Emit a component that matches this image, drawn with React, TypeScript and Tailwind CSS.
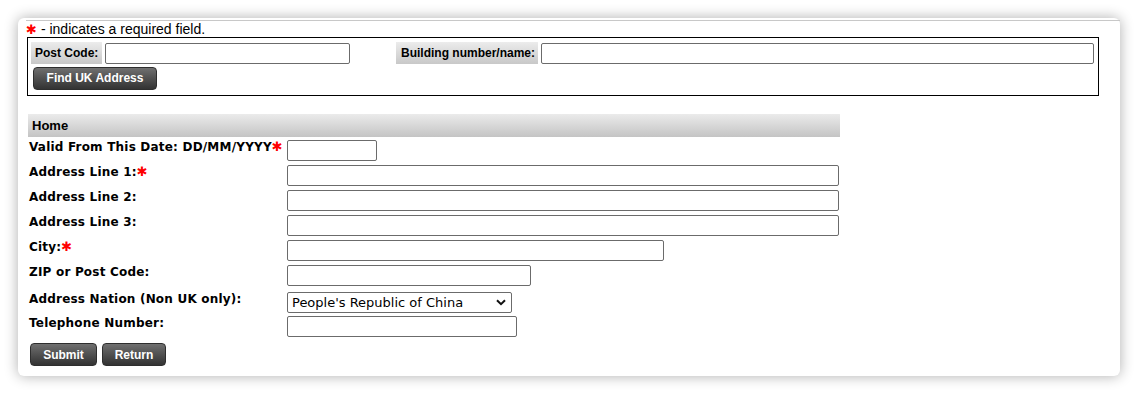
import React from "react";

const Star = () => (
  <span className="text-[#ff0000] font-bold text-[13px] leading-none" style={{ fontFamily: '"DejaVu Sans", sans-serif' }}>✱</span>
);

const inputCls =
  "h-[21px] border border-[#6b6b6b] rounded-[2px] bg-white outline-none px-1 text-[13px]";

const Btn = ({ children, w }: { children: React.ReactNode; w: string }) => (
  <button
    className={`h-[23px] ${w} rounded-[4px] border border-[#2e2e2e] bg-gradient-to-b from-[#707070] to-[#333333] text-white font-bold text-[12px] leading-none font-['Liberation_Sans',Arial,sans-serif]`}
  >
    {children}
  </button>
);

function Row({
  label,
  star,
  h,
  children,
}: {
  label: string;
  star?: boolean;
  h: string;
  children: React.ReactNode;
}) {
  return (
    <div className={`flex items-start ${h}`}>
      <div className="w-[258px] whitespace-nowrap font-bold text-[12px] leading-[14px] text-black font-['DejaVu_Sans',Verdana,sans-serif] tracking-[0.2px]">
        {label}
        {star && <Star />}
      </div>
      {children}
    </div>
  );
}

export default function App() {
  return (
    <div className="w-[1138px] h-[394px] bg-white pt-[18px] pl-[18px]">
      <div className="w-[1102px] h-[358px] rounded-[6px] bg-white shadow-[0_0_14px_rgba(0,0,0,0.32)] pl-[8px] pt-[2px] font-['Liberation_Sans',Arial,sans-serif]">
        <div className="border-t border-[#c8c8c8]">
          <div className="text-[14px] leading-[16px] text-black h-[16px] flex items-center">
            <Star />
            <span className="ml-[4px]">- indicates a required field.</span>
          </div>
          <div className="ml-[1px] w-[1072px] h-[59px] border border-black pl-[3px] pt-[4px]">
            <div className="flex items-center h-[22px]">
              <div className="w-[71px] h-[22px] bg-gradient-to-b from-[#ececec] to-[#c8c8c8] font-bold text-[12px] flex items-center pl-[4px]">
                Post Code:
              </div>
              <input className={`${inputCls} ml-[3px] w-[245px]`} />
              <div className="w-[46px]" />
              <div className="w-[142px] h-[22px] bg-gradient-to-b from-[#ececec] to-[#c8c8c8] font-bold text-[12px] flex items-center pl-[5px]">
                Building number/name:
              </div>
              <input className={`${inputCls} ml-[3px] w-[553px]`} />
            </div>
            <div className="mt-[1px] ml-[2px]">
              <Btn w="w-[124px]">Find UK Address</Btn>
            </div>
          </div>
          <div className="mt-[18px] ml-[2px] w-[812px] h-[23px] bg-gradient-to-b from-[#ebebeb] to-[#c4c4c4] font-bold text-[13px] flex items-center pl-[4px]">
            Home
          </div>
          <div className="mt-[3px] ml-[3px]">
            <Row label="Valid From This Date: DD/MM/YYYY" star h="h-[25px]">
              <input className={`${inputCls} w-[90px]`} />
            </Row>
            <Row label="Address Line 1:" star h="h-[25px]">
              <input className={`${inputCls} w-[552px]`} />
            </Row>
            <Row label="Address Line 2:" h="h-[25px]">
              <input className={`${inputCls} w-[552px]`} />
            </Row>
            <Row label="Address Line 3:" h="h-[25px]">
              <input className={`${inputCls} w-[552px]`} />
            </Row>
            <Row label="City:" star h="h-[25px]">
              <input className={`${inputCls} w-[377px]`} />
            </Row>
            <Row label="ZIP or Post Code:" h="h-[27px]">
              <input className={`${inputCls} w-[244px]`} />
            </Row>
            <Row label="Address Nation (Non UK only):" h="h-[24px]">
              <div className="relative w-[225px] h-[21px] border border-[#6b6b6b] rounded-[2px] bg-white flex items-center pl-[4px] text-[13px] font-['DejaVu_Sans',Verdana,sans-serif] text-black">
                People's Republic of China
                <svg className="absolute right-[5px] top-[6px]" width="10" height="7" viewBox="0 0 10 7">
                  <path d="M1 1.2 L5 5.2 L9 1.2" fill="none" stroke="#111" strokeWidth="2" />
                </svg>
              </div>
            </Row>
            <Row label="Telephone Number:" h="h-[27px]">
              <input className={`${inputCls} w-[230px]`} />
            </Row>
            <div className="flex gap-[5px] ml-[1px]">
              <Btn w="w-[67px]">Submit</Btn>
              <Btn w="w-[64px]">Return</Btn>
            </div>
          </div>
        </div>
      </div>
    </div>
  );
}
